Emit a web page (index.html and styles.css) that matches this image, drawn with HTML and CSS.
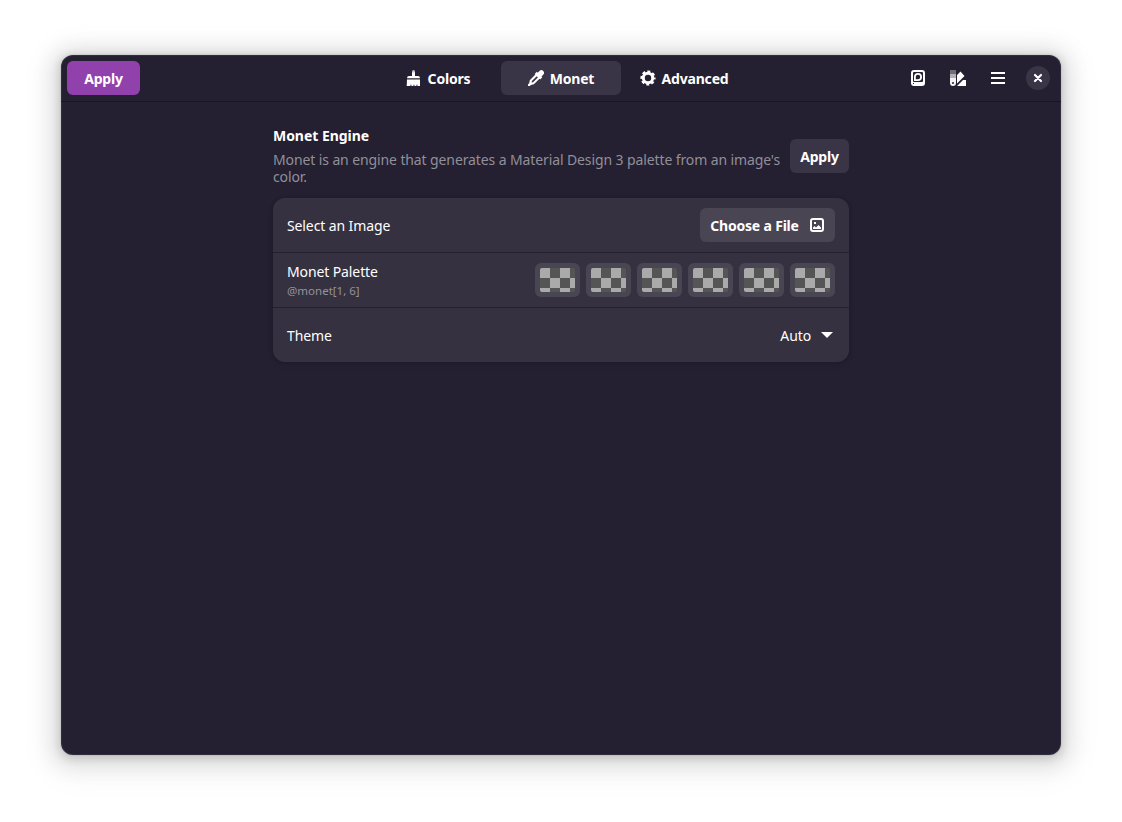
FILE: index.html
```html
<!DOCTYPE html>
<html lang="en">
<head>
<meta charset="utf-8">
<title>Monet</title>
<link rel="stylesheet" href="styles.css">
</head>
<body>
<main class="window">
  <header class="headerbar">
    <div class="side"><button class="button suggested">Apply</button></div>
    <nav class="tabs">
      <button class="tab"><svg class="icon" viewBox="0 0 16 16"><path fill-opacity=".75" d="M6 3V1.500a1.500 1.500 0 0 1 3 0V3z"/><path d="M6 2.500h3V6h3q2 0 2 2.300H1Q1 6 3 6h3zM1 9.500h13v6.500h-2.500l-.5-2-.7 2H8.500L8 14l-.7 2H5.500L5 14l-.7 2H0.700z"/></svg><span>Colors</span></button>
      <button class="tab active"><svg class="icon" viewBox="0 0 16 16"><path fill-rule="evenodd" d="M9.700 2.700 11.500 1a2.600 2.600 0 0 1 3.700 3.700L13.500 6.500l.8.800-2.100 2.100-.7-.7-5.600 5.600-3 .6-1.100 1a1.100 1.100 0 0 1-1.600-1.600l1-1.100.6-3 5.600-5.600-.7-.7L8.800 1.800zM8.700 6.200 3.900 11l-.3 1.500 1.500-.3L9.900 7.400z"/></svg><span>Monet</span></button>
      <button class="tab"><svg class="icon" viewBox="0 0 16 16"><g fill="none" stroke="#fff"><circle cx="8" cy="8" r="4.700" stroke-width="3"/><circle cx="8" cy="8" r="6.500" stroke-width="2.200" stroke-dasharray="2.900 2.205" stroke-dashoffset="1.450"/></g></svg><span>Advanced</span></button>
    </nav>
    <div class="side end">
      <button class="tool"><svg class="icon" viewBox="0 0 16 16"><path fill-rule="evenodd" d="M4 0h8a3 3 0 0 1 3 3v10a3 3 0 0 1-3 3H4a3 3 0 0 1-3-3V3a3 3 0 0 1 3-3zm0 2a1 1 0 0 0-1 1v8a1 1 0 0 0 1 1h8a1 1 0 0 0 1-1V3a1 1 0 0 0-1-1zM3 13v1h1v-1z"/><path fill="none" stroke="#fff" stroke-width="1.800" d="M4.900 10.100V7A3.100 3.100 0 1 1 8 10.100z"/></svg></button>
      <button class="tool"><svg class="icon" viewBox="0 0 16 16"><path fill-opacity=".35" d="M0 0h6v4H0z"/><path fill-opacity=".65" d="M0 4h6v4H0z"/><path fill-rule="evenodd" d="M0 8h6v5a3 3 0 0 1-6 0zm3 4a1 1 0 1 0 0 2 1 1 0 0 0 0-2z" fill-opacity=".95"/><path d="m7 5 3.500-3.500L14.500 6 7 13.500zM7 16l6-6h3v6z"/></svg></button>
      <button class="tool"><svg class="icon" viewBox="0 0 16 16"><path d="M1 2h14v2H1zM1 7h14v2H1zM1 12h14v2H1z"/></svg></button>
      <button class="tool close"><svg class="icon" viewBox="0 0 16 16"><path fill="none" stroke="#fff" stroke-width="2.200" stroke-linecap="round" d="m5 5 6 6m0-6-6 6"/></svg></button>
    </div>
  </header>
  <section class="content">
    <div class="group-head">
      <div class="group-text">
        <h1>Monet Engine</h1>
        <p>Monet is an engine that generates a Material Design 3 palette from an image's<br>color.</p>
      </div>
      <button class="button small">Apply</button>
    </div>
    <div class="card">
      <div class="row">
        <span>Select an Image</span>
        <button class="button choose"><span>Choose a File</span><svg class="icon" viewBox="0 0 16 16"><rect x="2" y="2" width="12" height="12" rx="2" fill="none" stroke="#fff" stroke-width="2"/><path d="M5 5h2v2H5zM4 12v-1.500L5.500 9 7 10.500 9.500 8l2.500 2.500V12z"/></svg></button>
      </div>
      <div class="row">
        <div class="labels"><span>Monet Palette</span><small>@monet[1, 6]</small></div>
        <div class="swatches">
          <div class="swatch"><i></i></div><div class="swatch"><i></i></div><div class="swatch"><i></i></div><div class="swatch"><i></i></div><div class="swatch"><i></i></div><div class="swatch"><i></i></div>
        </div>
      </div>
      <div class="row">
        <span>Theme</span>
        <div class="select"><span>Auto</span><svg class="arrow" viewBox="0 0 12 6"><path d="M0 0h12L6 6z"/></svg></div>
      </div>
    </div>
  </section>
</main>
</body>
</html>
```
FILE: styles.css
```css
* { box-sizing: border-box; }
body {
  margin: 0;
  height: 822px;
  padding: 55px 61px;
  background: #fff;
  color: #fff;
  font: 14px/17px "Noto Sans", sans-serif;
  letter-spacing: -0.11px;
  overflow: hidden;
}
span { white-space: nowrap; }
svg { fill: #fff; display: block; flex: none; }
button { font: inherit; color: inherit; border: 0; padding: 0; background: none; font-weight: 700; letter-spacing: -0.19px; }
.window {
  width: 1000px;
  height: 700px;
  border-radius: 12px;
  background: #241f31;
  box-shadow: inset 0 0 0 1px rgba(255,255,255,.07), 0 0 0 1px rgba(0,0,0,.05), 0 2px 8px 2px rgba(0,0,0,.13), 0 3px 20px 10px rgba(0,0,0,.09), 0 6px 32px 16px rgba(0,0,0,.04);
}
.headerbar {
  height: 47px;
  padding: 6px;
  display: grid;
  grid-template-columns: 1fr 366px 1fr;
  border-bottom: 1px solid #191522;
}
.side { display: flex; }
.end { justify-content: flex-end; gap: 6px; }
.button {
  height: 34px;
  border-radius: 6px;
  display: flex;
  align-items: center;
  justify-content: center;
  background: #3a3546;
}
.suggested { width: 73px; background: #9141ac; }
.tabs { display: grid; grid-template-columns: repeat(3, 120px); gap: 3px; height: 34px; }
.tab { display: flex; align-items: center; justify-content: center; gap: 6px; border-radius: 6px; }
.active { background: #3a3546; }
.icon { width: 16px; height: 16px; }
.tool { width: 34px; height: 34px; display: grid; place-items: center; }
.close { width: 24px; height: 24px; margin: 5px 5px 0; border-radius: 50%; background: #3a3546; }
.content { width: 576px; margin: 0 auto; padding-top: 24px; }
.group-head { height: 72px; display: flex; justify-content: space-between; }
.group-text { padding-top: 1px; }
.group-head h1 { margin: 0 0 7px; font-size: 14px; line-height: 17px; letter-spacing: -0.04px; }
.group-head p { margin: 0; color: #918f98; white-space: nowrap; }
.small { width: 59px; margin-top: 13px; flex: none; }
.card { border-radius: 12px; background: #363140; box-shadow: 0 1px 3px 1px rgba(0,0,0,.1), 0 2px 6px 2px rgba(0,0,0,.03); }
.row { height: 54px; padding: 0 14px; display: flex; align-items: center; justify-content: space-between; }
.row + .row { height: 55px; border-top: 1px solid #25202e; }
.choose { width: 135px; gap: 10px; background: #4a4553; }
.labels { display: flex; flex-direction: column; gap: 3px; }
.labels small { font-size: 11.5px; line-height: 15px; color: #95929a; letter-spacing: 0; }
.swatches { display: flex; gap: 6px; }
.swatch { width: 45px; height: 34px; padding: 5px; border-radius: 6px; background: #4a4553; }
.swatch i { display: block; height: 24px; border-radius: 2px; background: repeating-conic-gradient(#555 0 25%, #aaa 0 50%) 0 0 / 20px 20px; }
.select { display: flex; align-items: center; gap: 10px; padding-right: 2px; }
.arrow { width: 12px; height: 6px; }
```
